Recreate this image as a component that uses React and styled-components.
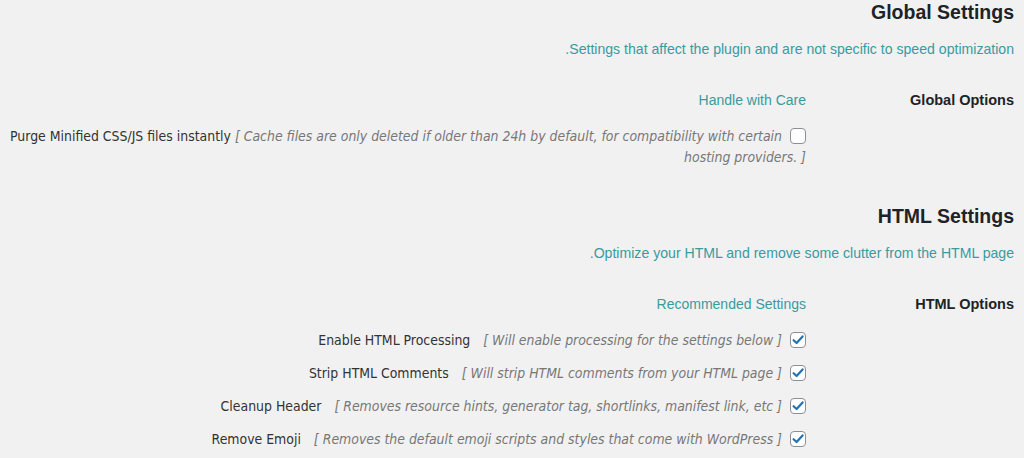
import React from "react";
import styled, { createGlobalStyle } from "styled-components";

const Global = createGlobalStyle`
  html, body { margin: 0; padding: 0; background: #f1f1f1; }
  body { font-family: "Liberation Sans", Arial, sans-serif; }
`;

const Page = styled.div`
  direction: rtl;
  padding: 0 10px 0 0;
  width: 1024px;
  box-sizing: border-box;
  height: 458px;
  overflow: hidden;
`;

const Section = styled.section`
  margin-bottom: ${(p) => p.$gap || 0}px;
`;

const Heading = styled.h2`
  margin: 0;
  font-family: "Liberation Sans", Arial, sans-serif;
  font-size: 19.5px;
  line-height: 24px;
  font-weight: 700;
  color: #1d2327;
`;

const Lead = styled.p`
  margin: 15px 0 0;
  font-size: 14.1px;
  line-height: 20px;
  color: #3a9aa0;
`;

const FormTable = styled.div`
  display: grid;
  grid-template-columns: 208px 1fr;
  margin-top: 31px;
`;

const RowHead = styled.div`
  font-family: "Liberation Sans", Arial, sans-serif;
  font-size: 14.5px;
  line-height: 20px;
  font-weight: 700;
  color: #1d2327;
`;

const Cell = styled.div`
  min-width: 0;
`;

const Intro = styled.p`
  margin: 0 0 16px;
  font-size: 14px;
  line-height: 20px;
  color: #3a9aa0;
`;

const Option = styled.label`
  display: block;
  font-family: "DejaVu Sans Condensed", "DejaVu Sans", sans-serif;
  font-size: 13.9px;
  line-height: 21px;
  color: #333;
  margin-bottom: 12px;
`;

const Note = styled.span`
  font-style: italic;
  color: #777;
  margin-left: ${(p) => (p.$spaced ? 9 : 0)}px;
`;

const Box = styled.span`
  display: inline-block;
  vertical-align: -3px;
  width: 16px;
  height: 16px;
  box-sizing: border-box;
  border: 1px solid #8c8f94;
  border-radius: 4px;
  background: #fff;
  margin-left: 8px;
  position: relative;
  svg {
    position: absolute;
    left: -1px;
    top: -1px;
  }
`;

const Check = ({ checked }) => (
  <Box>
    {checked && (
      <svg width="16" height="16" viewBox="0 0 16 16">
        <path d="M3.6 8.2 L6.6 11 L12.6 4.4" fill="none" stroke="#2271b1" strokeWidth="2.2" strokeLinecap="round" strokeLinejoin="round" />
      </svg>
    )}
  </Box>
);

const htmlOptions = [
  ["Enable HTML Processing", "[ Will enable processing for the settings below ]"],
  ["Strip HTML Comments", "[ Will strip HTML comments from your HTML page ]"],
  ["Cleanup Header", "[ Removes resource hints, generator tag, shortlinks, manifest link, etc ]"],
  ["Remove Emoji", "[ Removes the default emoji scripts and styles that come with WordPress ]"],
];

export default function App() {
  return (
    <>
      <Global />
      <Page>
        <Section $gap={24}>
          <Heading>Global Settings</Heading>
          <Lead>Settings that affect the plugin and are not specific to speed optimization.</Lead>
          <FormTable>
            <RowHead>Global Options</RowHead>
            <Cell>
              <Intro>Handle with Care</Intro>
              <Option>
                <Check />
                Purge Minified CSS/JS files instantly{" "}
                <Note>[ Cache files are only deleted if older than 24h by default, for compatibility with certain hosting providers. ]</Note>
              </Option>
            </Cell>
          </FormTable>
        </Section>
        <Section>
          <Heading>HTML Settings</Heading>
          <Lead>Optimize your HTML and remove some clutter from the HTML page.</Lead>
          <FormTable>
            <RowHead>HTML Options</RowHead>
            <Cell>
              <Intro>Recommended Settings</Intro>
              {htmlOptions.map(([label, note]) => (
                <Option key={label}>
                  <Check checked />
                  {label}{" "}
                  <Note $spaced>{note}</Note>
                </Option>
              ))}
            </Cell>
          </FormTable>
        </Section>
      </Page>
    </>
  );
}
